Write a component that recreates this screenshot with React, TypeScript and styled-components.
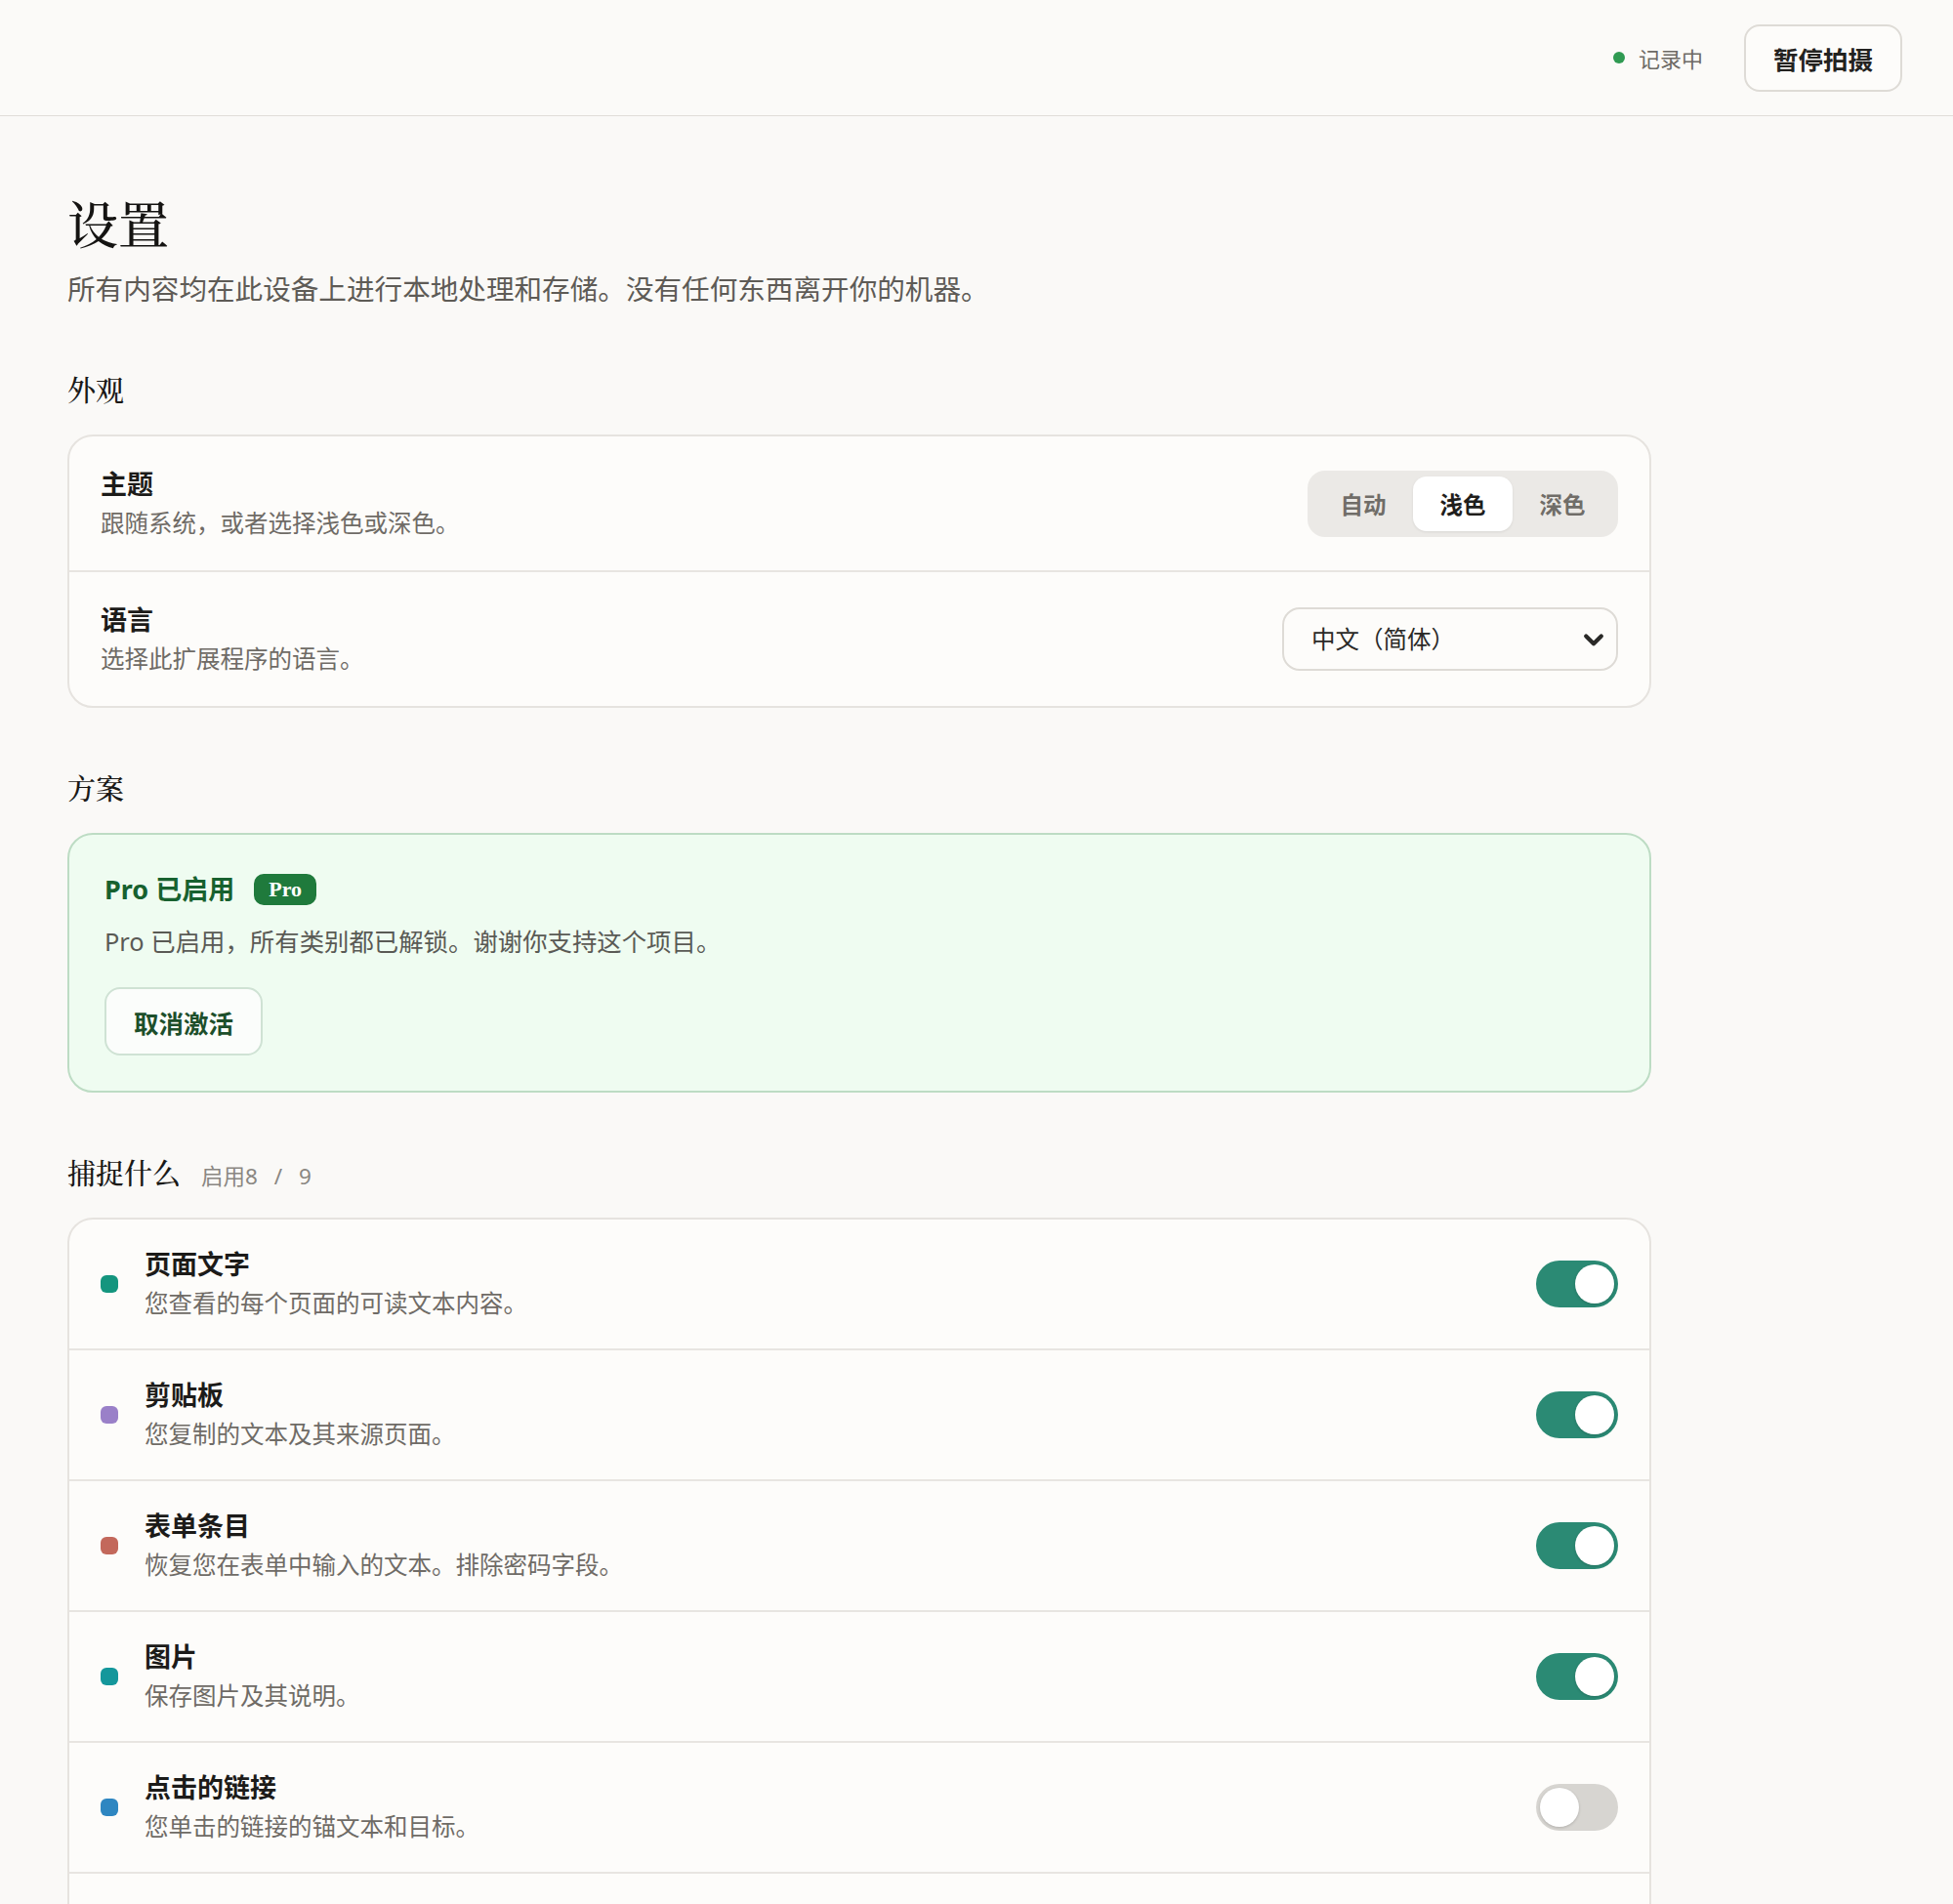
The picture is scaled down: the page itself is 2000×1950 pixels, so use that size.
import React, { useState } from "react";
import styled, { createGlobalStyle } from "styled-components";

const sans = `"Noto Sans", "Noto Sans CJK SC", sans-serif`;
const serif = `"Noto Serif CJK SC", "Source Han Serif SC", "Liberation Serif", serif`;

const GlobalStyle = createGlobalStyle`
  * { box-sizing: border-box; }
  body {
    margin: 0;
    background: #faf9f7;
    font-family: ${sans};
    color: #1d1c1a;
  }
`;

const Header = styled.header`
  height: 119px;
  display: flex;
  align-items: center;
  justify-content: flex-end;
  gap: 42px;
  padding: 0 52px;
  border-bottom: 1px solid #e0ddd8;
  background: #fbfaf8;
`;

const Status = styled.div`
  display: flex;
  align-items: center;
  gap: 14px;
  font-size: 22px;
  color: #6d6a65;
`;

const LiveDot = styled.span`
  width: 12px;
  height: 12px;
  border-radius: 50%;
  background: #2f9a52;
`;

const Button = styled.button<{ $tone?: "green" }>`
  height: ${(p) => (p.$tone ? "70px" : "69px")};
  padding: 0 28px;
  border-radius: 16px;
  border: 2px solid ${(p) => (p.$tone ? "#cfe2d4" : "#dedbd6")};
  background: ${(p) => (p.$tone ? "#fbfdfb" : "#fdfcfa")};
  color: ${(p) => (p.$tone ? "#1d4f2b" : "#232220")};
  font-family: ${sans};
  font-size: 25.5px;
  font-weight: 700;
  cursor: pointer;
`;

const Main = styled.main`
  padding: 78px 69px 80px;
`;

const Content = styled.div`
  max-width: 1622px;
`;

const PageTitle = styled.h1`
  margin: 0;
  font-family: ${serif};
  font-size: 52px;
  font-weight: 500;
  line-height: 62px;
  color: #151412;
`;

const Lead = styled.p`
  margin: 16px 0 0;
  font-size: 28.6px;
  line-height: 42px;
  color: #5e5b56;
`;

const Section = styled.section`
  margin-top: 62px;
`;

const SectionHead = styled.div`
  display: flex;
  align-items: baseline;
  gap: 21px;
  margin-bottom: 27px;
`;

const SectionTitle = styled.h2`
  margin: 0;
  font-family: ${serif};
  font-size: 29px;
  font-weight: 500;
  line-height: 39px;
  color: #1a1917;
`;

const Count = styled.span`
  font-size: 22.5px;
  color: #8a8782;
  word-spacing: 11px;
`;

const Card = styled.div`
  border: 2px solid #e6e3df;
  border-radius: 26px;
  background: #fdfcfa;
  overflow: hidden;
`;

const Row = styled.div<{ $dense?: boolean }>`
  display: flex;
  align-items: center;
  gap: 27px;
  padding: ${(p) => (p.$dense ? "28px 32px" : "30.5px 32px")};
  & + & {
    border-top: 2px solid #e8e5e1;
  }
`;

const RowText = styled.div`
  flex: 1;
  display: flex;
  flex-direction: column;
  gap: 4px;
`;

const RowTitle = styled.div`
  font-size: 27px;
  font-weight: 700;
  line-height: 36px;
  color: #1c1b19;
`;

const RowDesc = styled.div`
  font-size: 24.5px;
  line-height: 36px;
  color: #6f6b66;
`;

const Segmented = styled.div`
  display: flex;
  padding: 6px;
  border-radius: 18px;
  background: #ebe9e6;
`;

const Segment = styled.button<{ $active?: boolean }>`
  width: 102px;
  height: 56px;
  border: 0;
  border-radius: 14px;
  background: ${(p) => (p.$active ? "#ffffff" : "transparent")};
  box-shadow: ${(p) => (p.$active ? "0 1px 3px rgba(0,0,0,0.08)" : "none")};
  color: ${(p) => (p.$active ? "#1f1e1c" : "#706d68")};
  font-family: ${sans};
  font-size: 23.5px;
  font-weight: 700;
  cursor: pointer;
`;

const SelectWrap = styled.div`
  position: relative;
  width: 344px;
`;

const Select = styled.select`
  appearance: none;
  width: 100%;
  height: 65px;
  padding: 0 56px 0 28px;
  border: 2px solid #dedbd6;
  border-radius: 18px;
  background: #fdfcfa;
  color: #2a2927;
  font-family: ${sans};
  font-size: 24.5px;
`;

const Chevron = styled.svg`
  position: absolute;
  right: 8px;
  top: 50%;
  transform: translateY(-50%);
  pointer-events: none;
`;

const ProCard = styled.div`
  padding: 36px;
  border: 2px solid #bddcc4;
  border-radius: 26px;
  background: #effcf1;
`;

const ProTitle = styled.div`
  display: flex;
  align-items: center;
  gap: 20px;
  font-size: 27px;
  font-weight: 700;
  line-height: 39px;
  color: #17612f;
`;

const Badge = styled.span`
  display: inline-flex;
  align-items: center;
  height: 32px;
  padding: 0 15px;
  border-radius: 10px;
  background: #1f7a3c;
  color: #ffffff;
  font-family: "Liberation Serif", "DejaVu Serif", serif;
  font-size: 22px;
  font-weight: 700;
`;

const ProDesc = styled.p`
  margin: 16px 0 29px;
  font-size: 25.4px;
  line-height: 36px;
  color: #5a5a55;
`;

const Swatch = styled.span<{ $color: string }>`
  flex: none;
  width: 18px;
  height: 18px;
  border-radius: 6px;
  background: ${(p) => p.$color};
`;

const Track = styled.button<{ $on: boolean }>`
  flex: none;
  position: relative;
  width: 84px;
  height: 48px;
  border: 0;
  border-radius: 24px;
  background: ${(p) => (p.$on ? "#2b8a74" : "#d7d5d1")};
  cursor: pointer;
`;

const Knob = styled.span<{ $on: boolean }>`
  position: absolute;
  top: 4px;
  left: ${(p) => (p.$on ? "40px" : "4px")};
  width: 40px;
  height: 40px;
  border-radius: 50%;
  background: #ffffff;
  box-shadow: 0 1px 3px rgba(0, 0, 0, 0.18);
`;

const categories = [
  { name: "页面文字", desc: "您查看的每个页面的可读文本内容。", color: "#14957e", on: true },
  { name: "剪贴板", desc: "您复制的文本及其来源页面。", color: "#9a80c8", on: true },
  { name: "表单条目", desc: "恢复您在表单中输入的文本。排除密码字段。", color: "#c3685b", on: true },
  { name: "图片", desc: "保存图片及其说明。", color: "#14979b", on: true },
  { name: "点击的链接", desc: "您单击的链接的锚文本和目标。", color: "#2e86c1", on: false },
  { name: "搜索查询", desc: "您在搜索引擎中输入的查询。", color: "#d49a2a", on: true },
  { name: "视频", desc: "您观看的视频标题和进度。", color: "#c45a8c", on: true },
  { name: "下载", desc: "您下载的文件名称和来源。", color: "#6b7f3a", on: true },
  { name: "书签", desc: "您添加的书签及其所在文件夹。", color: "#8a6d52", on: true },
];

const Toggle = ({ on, onClick }: { on: boolean; onClick: () => void }) => (
  <Track $on={on} onClick={onClick} aria-pressed={on}>
    <Knob $on={on} />
  </Track>
);

export default function App() {
  const [theme, setTheme] = useState("light");
  const [state, setState] = useState(categories.map((c) => c.on));
  const enabled = state.filter(Boolean).length;

  return (
    <>
      <GlobalStyle />
      <Header>
        <Status>
          <LiveDot />
          记录中
        </Status>
        <Button>暂停拍摄</Button>
      </Header>
      <Main>
        <Content>
          <PageTitle>设置</PageTitle>
          <Lead>所有内容均在此设备上进行本地处理和存储。没有任何东西离开你的机器。</Lead>

          <Section>
            <SectionHead>
              <SectionTitle>外观</SectionTitle>
            </SectionHead>
            <Card>
              <Row>
                <RowText>
                  <RowTitle>主题</RowTitle>
                  <RowDesc>跟随系统，或者选择浅色或深色。</RowDesc>
                </RowText>
                <Segmented>
                  {[
                    ["auto", "自动"],
                    ["light", "浅色"],
                    ["dark", "深色"],
                  ].map(([k, label]) => (
                    <Segment key={k} $active={theme === k} onClick={() => setTheme(k)}>
                      {label}
                    </Segment>
                  ))}
                </Segmented>
              </Row>
              <Row>
                <RowText>
                  <RowTitle>语言</RowTitle>
                  <RowDesc>选择此扩展程序的语言。</RowDesc>
                </RowText>
                <SelectWrap>
                  <Select defaultValue="zh">
                    <option value="zh">中文（简体）</option>
                    <option value="en">English</option>
                  </Select>
                  <Chevron width="34" height="34" viewBox="0 0 24 24" fill="none">
                    <path d="M6.5 9.5l5.5 5.5 5.5-5.5" stroke="#2a2927" strokeWidth="3" strokeLinecap="round" strokeLinejoin="round" />
                  </Chevron>
                </SelectWrap>
              </Row>
            </Card>
          </Section>

          <Section>
            <SectionHead>
              <SectionTitle>方案</SectionTitle>
            </SectionHead>
            <ProCard>
              <ProTitle>
                Pro 已启用
                <Badge>Pro</Badge>
              </ProTitle>
              <ProDesc>Pro 已启用，所有类别都已解锁。谢谢你支持这个项目。</ProDesc>
              <Button $tone="green">取消激活</Button>
            </ProCard>
          </Section>

          <Section>
            <SectionHead>
              <SectionTitle>捕捉什么</SectionTitle>
              <Count>
                启用{enabled} / {categories.length}
              </Count>
            </SectionHead>
            <Card>
              {categories.map((c, i) => (
                <Row $dense key={c.name}>
                  <Swatch $color={c.color} />
                  <RowText>
                    <RowTitle>{c.name}</RowTitle>
                    <RowDesc>{c.desc}</RowDesc>
                  </RowText>
                  <Toggle
                    on={state[i]}
                    onClick={() => setState((s) => s.map((v, j) => (j === i ? !v : v)))}
                  />
                </Row>
              ))}
            </Card>
          </Section>
        </Content>
      </Main>
    </>
  );
}
